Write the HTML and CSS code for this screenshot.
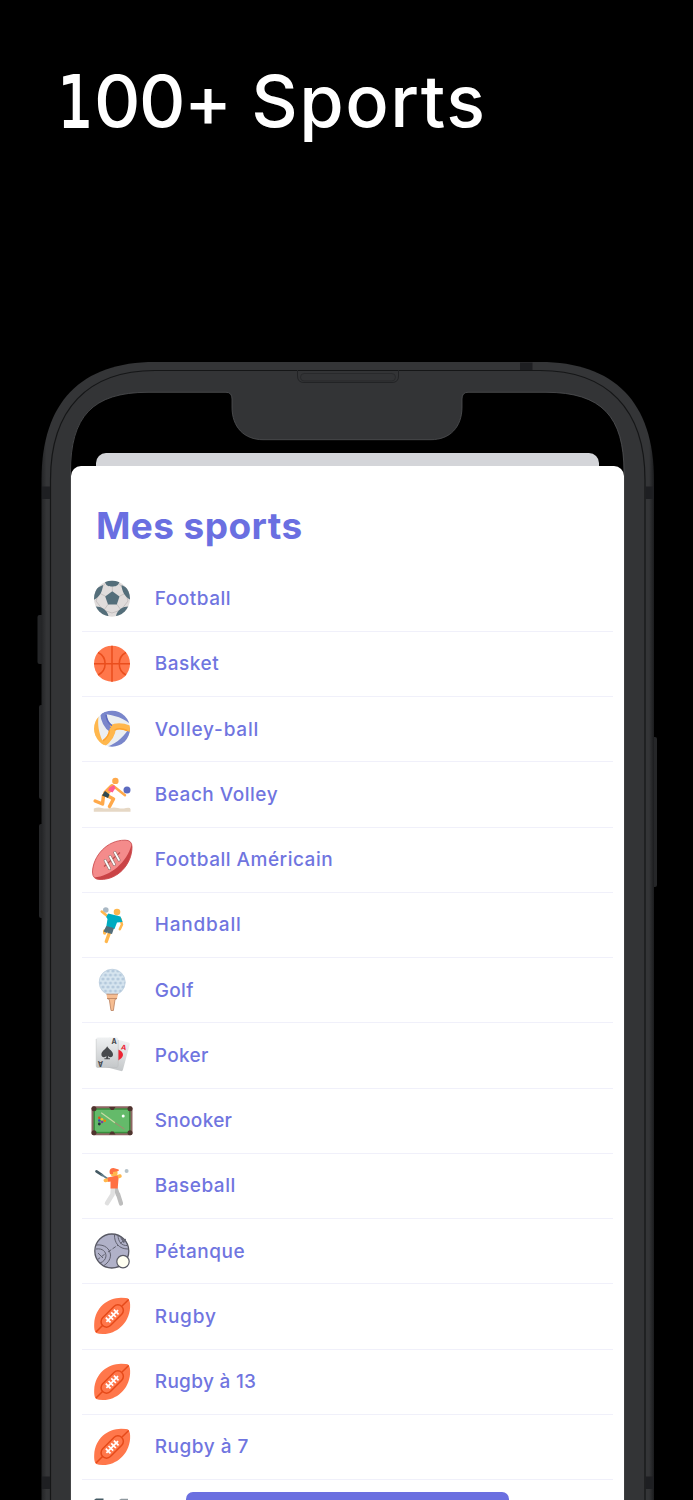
FILE: index.html
```html
<!DOCTYPE html>
<html lang="fr">
<head>
    <meta charset="UTF-8">
    <meta name="viewport" content="width=device-width, initial-scale=1.0">
    <title>100+ Sports</title>
    <link rel="stylesheet" href="styles.css">
</head>
<body>
    <h1><span class="one">1</span><span class="zeros">00</span>+ <span class="word">Sports</span></h1>

    <div class="phone">
        <!-- Phone frame -->
        <svg class="frame" viewBox="0 350 693 1150">
            <defs>
                <linearGradient id="edge" x1="0" x2="1">
                    <stop offset="0" stop-color="#242527"/>
                    <stop offset="0.008" stop-color="#343537"/>
                    <stop offset="0.992" stop-color="#343537"/>
                    <stop offset="1" stop-color="#1b1c1e"/>
                </linearGradient>
            </defs>
            <g fill="#252628">
                <rect x="37.5" y="615" width="8" height="49" rx="2"/>
                <rect x="39" y="705" width="8" height="94" rx="2"/>
                <rect x="39" y="824" width="8" height="94" rx="2"/>
                <rect x="648" y="737" width="9" height="150" rx="2"/>
            </g>
            <path d="M41.5 1510V480C41.5 402 81 362 155 362H540C614 362 654 402 654 480V1510Z" fill="url(#edge)"/>
            <path d="M50.5 1510V480C50.5 409 88 370.5 155 370.5H540C607 370.5 645 409 645 480V1510Z" fill="#333436" stroke="#151617" stroke-width="1.2"/>
            <g fill="#1e1f22">
                <rect x="42" y="486.5" width="8" height="12.5"/>
                <rect x="645.5" y="486.5" width="8.5" height="12.5"/>
                <rect x="42" y="1476.5" width="8" height="12.5"/>
                <rect x="645.5" y="1476.5" width="8.5" height="12.5"/>
                <rect x="520" y="362.5" width="12.5" height="7.5"/>
            </g>
            <path d="M297.5 370V376Q297.5 382.5 304 382.5H392Q398.5 382.5 398.5 376V370" fill="none" stroke="#222325" stroke-width="1"/>
            <rect x="300.5" y="373.5" width="95" height="7.5" rx="3.7" fill="#323335" stroke="#28292b"/>
            <path d="M70.5 1510V472C70.5 417 92 392.3 148 392.3H226Q232 392.3 232 399V407C232 427 244 439.7 263 439.7H431C450 439.7 462 427 462 407V399Q462 392.3 468 392.3H546C602 392.3 624 417 624 472V1510Z" fill="#000" stroke="#515254" stroke-width="0.8"/>
        </svg>

        <div class="screen">
            <div class="sheet-back"></div>
            <div class="sheet">
                <h2>Mes sports</h2>
                <ul class="sports">
                    <li>
                        <svg viewBox="0 0 44 44">
                            <clipPath id="foot"><circle cx="22" cy="21.7" r="18"/></clipPath>
                            <g clip-path="url(#foot)">
                                <rect width="44" height="44" fill="#e0dcdb"/>
                                <path d="M22.3 14V7M29.5 19.2L36 16M26.8 27.2L31 33M18.2 27.2L14 33M15.5 19.2L9 16M15 6.5L9 15L6 24L13 33L22 36L31 33L38 24L35.5 15L29 6.5" fill="none" stroke="#c5c1c0" stroke-width="1"/>
                                <path d="M22.3 14.2L29.5 19.4L26.8 27.4H18L15.2 19.4Z" fill="#546e7a"/>
                                <path d="M15 5C16 9 19 9.5 22.2 9.5S28 9 29.5 5L22 1ZM31.5 8C32 14 34.5 20 41 23L43 14ZM13 8C12.5 14 10 20 3.5 23L1 14ZM5 29.5C10 29 17 32 18.5 39L9 42ZM39.5 29.5C34 29 27.5 32 26 39L35 42Z" fill="#546e7a"/>
                            </g>
                        </svg>
                        <span>Football</span>
                    </li>
                    <li>
                        <svg viewBox="0 0 44 44">
                            <circle cx="22" cy="21.7" r="18" fill="#ff774b"/>
                            <path d="M22 3.7V39.7M4 21.7H40M8 10.5C17.5 15 17.5 28.5 8 33M36 10.5C27 15 27 28.5 36 33" fill="none" stroke="#ea4e1d" stroke-width="1.5"/>
                        </svg>
                        <span>Basket</span>
                    </li>
                    <li>
                        <svg viewBox="0 0 44 44">
                            <clipPath id="volley"><circle r="18"/></clipPath>
                            <g transform="translate(22 21.7)" clip-path="url(#volley)">
                                <circle r="18" fill="#eceff1"/>
                                <path d="M-12 -15C-1 -14 8 -13 18 -5V-20H-12Z" fill="#7986cb"/>
                                <path d="M-12 -15C-1 -14 8 -13 18 -5V-20H-12Z" fill="#7986cb" transform="rotate(120)"/>
                                <path d="M-12 -15C-1 -14 8 -13 18 -5V-20H-12Z" fill="#ffb74d" transform="rotate(240)"/>
                                <g fill="none" stroke-width="6">
                                    <path d="M-9 -17Q-8 -4 0 1" stroke="#7986cb"/>
                                    <path d="M-9 -17Q-8 -4 0 1" stroke="#ffb74d" transform="rotate(240)"/>
                                    <path d="M-9 -17Q-8 -4 0 1" stroke="#ffb74d" transform="rotate(120)"/>
                                </g>
                                <g fill="none" stroke-width="1.5">
                                    <path d="M-6 -14Q-5 -6 0 -3" stroke="#5c6bc0"/>
                                    <path d="M-6 -14Q-5 -6 0 -3" stroke="#ffa22b" transform="rotate(120)"/>
                                    <path d="M-6 -14Q-5 -6 0 -3" stroke="#ffa22b" transform="rotate(240)"/>
                                </g>
                            </g>
                        </svg>
                        <span class="wide">Volley-ball</span>
                    </li>
                    <li>
                        <svg viewBox="0 0 44 44">
                            <path d="M3.8 36.5Q8 35 12 36T20 36T28 36T36 36T40.5 37V39.7H3.8Z" fill="#e6d8c5"/>
                            <circle cx="25.4" cy="8.9" r="3.2" fill="#ffa94a"/>
                            <circle cx="37" cy="17.9" r="3.5" fill="#5c6bc0"/>
                            <g fill="none" stroke="#ffa94a" stroke-linecap="round" stroke-linejoin="round">
                                <path d="M24 14.5L35 23.2" stroke-width="2.5"/>
                                <path d="M17 23.5L23.5 27L19.5 34.5M13.5 23.5L12.5 32L5.2 29" stroke-width="3.5"/>
                                <path d="M16 21L22 15" stroke-width="5.5"/>
                            </g>
                            <path d="M19.5 15.5L24 13L25.5 16L22.5 20.5L18 18.5Z" fill="#ff5c93"/>
                            <path d="M15 19L19.5 22.5L18 26L12 23.5Z" fill="#314a50"/>
                        </svg>
                        <span>Beach Volley</span>
                    </li>
                    <li>
                        <svg viewBox="0 0 44 44">
                            <path d="M2.5 34C3 18 17 2 35 2.2Q42 2 42 9C42 26 28 42 10 41.5Q2.5 41.5 2.5 34Z" fill="#f48b8b"/>
                            <path d="M4.500 39.500C20 38 37 25 41.500 6.500Q42 8 42 9C42 26 28 42 10 41.500Q6 41.500 4.500 39.500Z" fill="#ca4346"/>
                            <path d="M2.5 34C3 18 17 2 35 2.2Q42 2 42 9C42 26 28 42 10 41.5Q2.5 41.5 2.5 34Z" fill="none" stroke="#cc5052" stroke-width="0.9"/>
                            <path d="M14 28.5L30 14.5" stroke="#bd4b4b" stroke-width="1.2"/>
                            <path d="M15.2 22.5L19.5 30.5M20 18.5L24.3 26.5M24.8 14.5L29 22" stroke="#93766f" stroke-width="3" stroke-linecap="round"/>
                            <path d="M15.2 22.5L19.5 30.5M20 18.5L24.3 26.5M24.8 14.5L29 22" stroke="#fff" stroke-width="1.7" stroke-linecap="round"/>
                        </svg>
                        <span>Football Américain</span>
                    </li>
                    <li>
                        <svg viewBox="0 0 44 44">
                            <circle cx="15.8" cy="7" r="2.8" fill="#a9b8c4"/>
                            <circle cx="27" cy="9.1" r="3.3" fill="#ffb74d"/>
                            <g fill="none" stroke="#ffb74d" stroke-linecap="round" stroke-linejoin="round">
                                <path d="M18.5 14L11.7 8.5" stroke-width="2.5"/>
                                <path d="M30.5 16L32 21.5L29.8 26.2" stroke-width="2.5"/>
                                <path d="M19.7 29L16.3 38.5M14.7 28V30" stroke-width="3.4"/>
                            </g>
                            <path d="M18.2 10.5L30.5 13.5L32.5 19L27 19.5L24.5 26L16.3 23.5L17.5 16L16.2 14Z" fill="#00acc1"/>
                            <path d="M16.3 23L24 25L22 31L17.5 30L18 28.5L17 30L13.5 28.5Z" fill="#546e7a"/>
                        </svg>
                        <span class="wide">Handball</span>
                    </li>
                    <li>
                        <svg viewBox="0 0 44 44">
                            <defs>
                                <pattern id="dimples" width="5" height="8" patternUnits="userSpaceOnUse" x="0.5" y="1">
                                    <circle cx="2.5" cy="2" r="1.6" fill="#b4c9dc"/>
                                    <circle cx="0" cy="6" r="1.6" fill="#b4c9dc"/>
                                    <circle cx="5" cy="6" r="1.6" fill="#b4c9dc"/>
                                </pattern>
                            </defs>
                            <circle cx="22.2" cy="14.2" r="13.2" fill="#d7e5ef"/>
                            <circle cx="22.2" cy="14.2" r="13" fill="url(#dimples)" stroke="#bccddc" stroke-width="0.7"/>
                            <path d="M16.5 26.2H28L27 30.5L25 31.5L23.4 42.5H21L19.3 31.5L17.2 30.5Z" fill="#f6bd91"/>
                            <path d="M16.5 26.2H28M17.2 30.5L19.3 31.5L21 42.5H23.4L25 31.5L27 30.5Z" fill="none" stroke="#ba805d" stroke-width="0.8"/>
                        </svg>
                        <span class="tight">Golf</span>
                    </li>
                    <li>
                        <svg viewBox="0 0 44 44">
                            <defs>
                                <linearGradient id="card" x2="0" y2="1">
                                    <stop stop-color="#eff1f2"/>
                                    <stop offset="1" stop-color="#c4c7c9"/>
                                </linearGradient>
                            </defs>
                            <rect x="14.5" y="6.5" width="22" height="29.5" rx="1.5" fill="url(#card)" transform="rotate(15 25 22)"/>
                            <path d="M28 16.5Q33 18 33 22Q32.5 25 28 27.5Z" fill="#ed2433"/>
                            <text x="31.3" y="16.8" class="ace red" transform="rotate(12 34 14)">A</text>
                            <rect x="6.2" y="4.5" width="22" height="30" rx="1.5" fill="url(#card)"/>
                            <path d="M6.2 6V33Q6.2 34.5 8 34.5H27Q28.2 34 28.2 32V7" fill="none" stroke="#b8babc" stroke-width="0.5"/>
                            <text x="21.5" y="10.5" class="ace">A</text>
                            <text x="-13" y="-28.3" class="ace" transform="rotate(180)">A</text>
                            <path d="M17.2 13.2C19 16.5 23 18 23 21.5C23 24.5 19.8 25 18 23L18.3 25.2H20V26.2H14.4V25.2H16.1L16.4 23C14.5 25 11.4 24.5 11.4 21.5C11.4 18 15.5 16.5 17.2 13.2Z" fill="#47494c"/>
                        </svg>
                        <span class="tight">Poker</span>
                    </li>
                    <li>
                        <svg viewBox="0 0 44 44">
                            <rect x="1.5" y="7.2" width="41" height="29" rx="2" fill="#8d6663"/>
                            <rect x="3.5" y="9.3" width="37" height="25" fill="#388e3c"/>
                            <rect x="5" y="10.8" width="34" height="22" fill="#64ba6a"/>
                            <g fill="#4e342e">
                                <circle cx="4" cy="9.8" r="2.5"/>
                                <circle cx="40" cy="9.8" r="2.5"/>
                                <circle cx="4" cy="33.8" r="2.5"/>
                                <circle cx="40" cy="33.8" r="2.5"/>
                                <path d="M19 8H25.5L23.5 11H21ZM19 35.5H25.5L23.5 32.5H21Z"/>
                            </g>
                            <path d="M11.2 13.8L25 23.7" stroke="#c8dba2" stroke-width="1.2"/>
                            <path d="M25 23.7L34.5 30.3" stroke="#9b9270" stroke-width="1.2"/>
                            <circle cx="33.2" cy="16.9" r="1.5" fill="#fff"/>
                            <circle cx="9.3" cy="18.7" r="1.3" fill="#e64a19"/>
                            <circle cx="9.3" cy="21.5" r="1.3" fill="#3949ab"/>
                            <circle cx="9.3" cy="25" r="1.4" fill="#263238"/>
                            <circle cx="12" cy="20.3" r="1.3" fill="#fbc02d"/>
                            <circle cx="12" cy="23" r="1.3" fill="#7b3fa1"/>
                            <circle cx="14.8" cy="21.7" r="1.3" fill="#f57c00"/>
                        </svg>
                        <span class="tight">Snooker</span>
                    </li>
                    <li>
                        <svg viewBox="0 0 44 44">
                            <path d="M6.5 7.3L12 11" stroke="#455a64" stroke-width="2.7" stroke-linecap="round"/>
                            <path d="M11 10.3L18 15" stroke="#607d8b" stroke-width="1.7"/>
                            <circle cx="36.6" cy="6.9" r="2" fill="#b5c2c9"/>
                            <path d="M28 30L31 39.5M25.5 24L28 31" stroke="#bdbdbd" stroke-width="4.2" stroke-linecap="round"/>
                            <path d="M23 24L22.5 30.5L17 39.2" fill="none" stroke="#e0e0e0" stroke-width="4.5" stroke-linecap="round" stroke-linejoin="round"/>
                            <circle cx="24" cy="9" r="3.6" fill="#ffb74d"/>
                            <path d="M19.5 8Q19.5 4 23.5 4L28.7 5.5V7L23 8V10H20Z" fill="#ff7043"/>
                            <path d="M15.3 16.5L20 15.5M26 13.5L30 12" stroke="#ffb74d" stroke-width="3.5" stroke-linecap="round"/>
                            <path d="M17.5 13.5L27.5 11.5L28.5 15L27.7 24.5H20.5V17.5L18.2 17.8Z" fill="#ff7043"/>
                        </svg>
                        <span>Baseball</span>
                    </li>
                    <li>
                        <svg viewBox="0 0 44 44">
                            <circle cx="21.8" cy="22" r="17" fill="#b0b1c8" stroke="#585964" stroke-width="1.3"/>
                            <g fill="none" stroke="#60616f" stroke-width="1">
                                <path d="M6 16C15 15 20 20 20.5 26C20.5 31 17 35 13 37M6 20C13 19 16 23 16 27Q15.5 32 10 34M24.5 5C24 14 29 20 38 20M28 6C28 13 32 17 37.5 16.5M31 8Q31 12 36 12.5"/>
                                <path d="M7 31L15 25M18 23L28 16M30 14.5L36 10" stroke-dasharray="4 1.5"/>
                                <path d="M8 24L13 29M32 9L34 14"/>
                            </g>
                            <circle cx="33" cy="32.6" r="6.2" fill="#fffff1" stroke="#585964" stroke-width="1.2"/>
                        </svg>
                        <span>Pétanque</span>
                    </li>
                    <li>
                        <svg viewBox="0 0 44 44" id="rugby">
                            <path d="M6.3 39C4.600 38 4 34 4.200 30C5 13 18 4 31 3.800Q37 3.800 38.600 4.900C40 7 40.300 9.500 40.100 13.500C39 30 26 39.800 13.500 40.100Q8.500 40.200 6.300 39Z" fill="#ff774b"/>
                            <path d="M6 38L13 31M32 12L38.7 5.5" stroke="#e64a19" stroke-width="1.5"/>
                            <g transform="rotate(-45 22.2 22)">
                                <rect x="8.7" y="16.5" width="27" height="11" rx="5.5" fill="#ff774b" stroke="#e64a19" stroke-width="1.5"/>
                                <path d="M14 22H30.5M16.5 18.7V25.3M20.3 18.7V25.3M24.1 18.7V25.3M27.9 18.7V25.3" stroke="#fff" stroke-width="1.7"/>
                            </g>
                        </svg>
                        <span class="wide">Rugby</span>
                    </li>
                    <li>
                        <svg viewBox="0 0 44 44"><use href="#rugby"/></svg>
                        <span class="tight">Rugby à 13</span>
                    </li>
                    <li>
                        <svg viewBox="0 0 44 44"><use href="#rugby"/></svg>
                        <span>Rugby à 7</span>
                    </li>
                    <li>
                        <svg viewBox="0 0 44 44">
                            <path d="M4 10L6 8.5H13.5V12H4Z" fill="#455a64"/>
                            <path d="M29 10L31 8.7H38V12H29Z" fill="#8e989e"/>
                        </svg>
                    </li>
                </ul>
            </div>
        </div>
        <button class="save" aria-label="Valider"></button>
    </div>
</body>
</html>
```

FILE: styles.css
```css
* {
    box-sizing: border-box;
}

body {
    margin: 0;
    height: 1500px;
    background: #000;
    font-family: Inter, "Open Sans", sans-serif;
    overflow: hidden;
}

h1 {
    margin: 0;
    height: 350px;
    padding: 56px 0 0 58px;
    font-size: 72px;
    line-height: 90px;
    font-weight: 550;
    color: #fff;
    white-space: nowrap;
}

/* The first digit has a foot */
h1 .one {
    display: inline-block;
    width: 36px;
    font-family: "DejaVu Sans", sans-serif;
    font-weight: 400;
    transform: scaleX(0.76);
    transform-origin: left;
    -webkit-text-stroke: 2.2px #fff;
}

h1 .zeros {
    letter-spacing: -1.5px;
}

h1 .word {
    letter-spacing: 1.5px;
}

/* Phone */
.phone {
    position: relative;
    height: 1150px;
    overflow: hidden;
}

.frame {
    position: absolute;
    top: 0;
    left: 0;
    width: 693px;
    height: 1150px;
}

.screen {
    position: relative;
    width: 553px;
    margin-left: 71px;
    padding-top: 102.5px;
}

.sheet-back {
    height: 13.5px;
    margin: 0 25.5px 0 25px;
    border-radius: 10px 10px 0 0;
    background: #d4d5d9;
}

.sheet {
    height: 1040px;
    padding: 35px 11.5px 0 11px;
    border-radius: 10px 10px 0 0;
    background: #fff;
}

.sheet h2 {
    margin: 0;
    padding-left: 14px;
    height: 65.5px;
    font-size: 37px;
    line-height: 50px;
    font-weight: 750;
    letter-spacing: 0.4px;
    color: #6a6fe1;
}

/* List of sports */
.sports {
    margin: 0;
    padding: 0;
    list-style: none;
}

.sports li {
    display: flex;
    align-items: center;
    height: 65.25px;
    padding-left: 7.6px;
    border-bottom: 1px solid #f0f0fa;
    font-size: 19px;
    font-weight: 500;
    letter-spacing: 0.5px;
    color: #7075df;
}

.sports .wide {
    letter-spacing: 0.8px;
}

.sports .tight {
    letter-spacing: 0.3px;
}

.sports svg {
    flex: none;
    width: 44px;
    height: 44px;
    margin-right: 21.2px;
}

.ace {
    font-size: 7px;
    font-weight: 700;
    letter-spacing: 0;
    fill: #47494c;
}

.ace.red {
    fill: #ed2433;
}

.save {
    position: absolute;
    left: 185.5px;
    top: 1142px;
    width: 323px;
    height: 60px;
    border: none;
    border-radius: 7px;
    background: #6b6fe0;
}
```
